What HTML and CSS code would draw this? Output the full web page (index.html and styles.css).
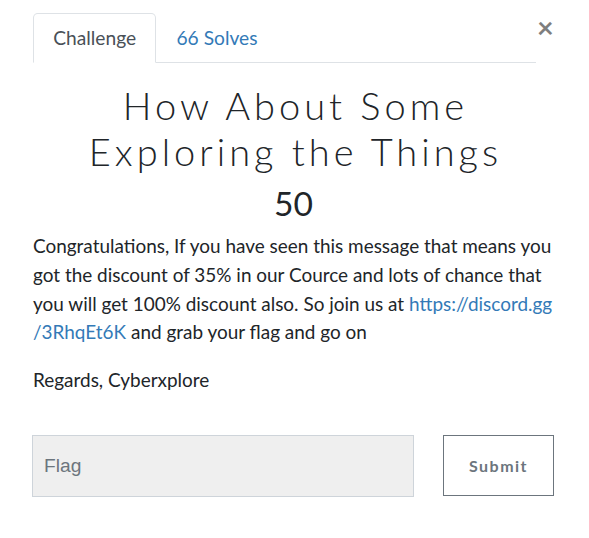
FILE: index.html
```html
<!DOCTYPE html>
<html lang="en">
<head>
<meta charset="utf-8">
<title>Challenge</title>
<link rel="stylesheet" href="styles.css">
</head>
<body>
<div class="modal-body">
  <div class="header">
    <ul class="nav-tabs">
      <li class="tab active">Challenge</li>
      <li class="tab link">66 Solves</li>
    </ul>
    <button class="close" type="button">&times;</button>
  </div>
  <h3 class="title">How About Some Exploring the Things</h3>
  <h4 class="value">50</h4>
  <div class="description">
    <p>Congratulations, If you have seen this message that means you got the discount of 35% in our Cource and lots of chance that you will get 100% discount also. So join us at <a href="#">https://discord.gg<wbr>/3RhqEt6K</a> and grab your flag and go on</p>
    <p>Regards, Cyberxplore</p>
  </div>
  <form class="submit-row">
    <input class="flag-input" type="text" placeholder="Flag">
    <button class="submit-btn" type="button">Submit</button>
  </form>
</div>
</body>
</html>
```
FILE: styles.css
```css
html, body {
  margin: 0;
  padding: 0;
  background: #fff;
}
body {
  font-family: Lato, "Open Sans", sans-serif;
  font-size: 19.2px;
  line-height: 1.5;
  color: #212529;
}
.modal-body {
  padding: 13px 35px 0 33px;
}
.header {
  display: flex;
  align-items: flex-start;
  margin-right: 1px;
}
.nav-tabs {
  flex: 1;
  display: flex;
  list-style: none;
  margin: 0;
  padding: 0;
  border-bottom: 1px solid #dee2e6;
}
.tab {
  padding: 9.6px 19.2px;
  border: 1px solid transparent;
  border-top-left-radius: 4.8px;
  border-top-right-radius: 4.8px;
  margin-bottom: -1px;
}
.tab.active {
  color: #495057;
  border-color: #dee2e6 #dee2e6 #fff;
  background: #fff;
}
.tab.link {
  color: #337ab7;
}
.close {
  width: 16px;
  margin: 0 0 0 1px;
  padding: 0;
  border: 0;
  background: transparent;
  font-family: Lato, sans-serif;
  font-size: 28.8px;
  font-weight: 700;
  line-height: 1;
  color: #000;
  opacity: .5;
}
.title {
  box-sizing: border-box;
  max-width: 445px;
  margin: 19px auto 0;
  padding-left: 4px;
  text-align: center;
  font-family: Lato, sans-serif;
  font-weight: 300;
  font-size: 38px;
  line-height: 46px;
  letter-spacing: 4px;
  color: #212529;
}
.value {
  margin: 9px 0 0;
  text-align: center;
  font-weight: 400;
  font-size: 33.6px;
  line-height: 40px;
}
.description {
  margin-top: 9px;
  font-size: 18.95px;
  line-height: 28.8px;
}
.description p {
  margin: 0 0 19.2px;
}
.description a {
  color: #337ab7;
  text-decoration: none;
}
.submit-row {
  display: flex;
  align-items: flex-start;
  margin: 40px 0 0 -1px;
}
.flag-input {
  box-sizing: border-box;
  width: 382px;
  height: 62px;
  margin: 0;
  padding: 0 11px;
  border: 1px solid #ced4da;
  border-radius: 0;
  background: #efefef;
  font-family: "Liberation Sans", Arial, sans-serif;
  font-size: 19.2px;
  color: #495057;
}
.flag-input::placeholder {
  color: #6c757d;
}
.submit-btn {
  box-sizing: border-box;
  width: 111px;
  height: 61px;
  margin-left: 29px;
  padding: 0;
  border: 1px solid #6c757d;
  border-radius: 0;
  background: #fff;
  font-family: Lato, sans-serif;
  font-size: 16px;
  font-weight: 700;
  letter-spacing: 1.5px;
  color: #6c757d;
}
```
